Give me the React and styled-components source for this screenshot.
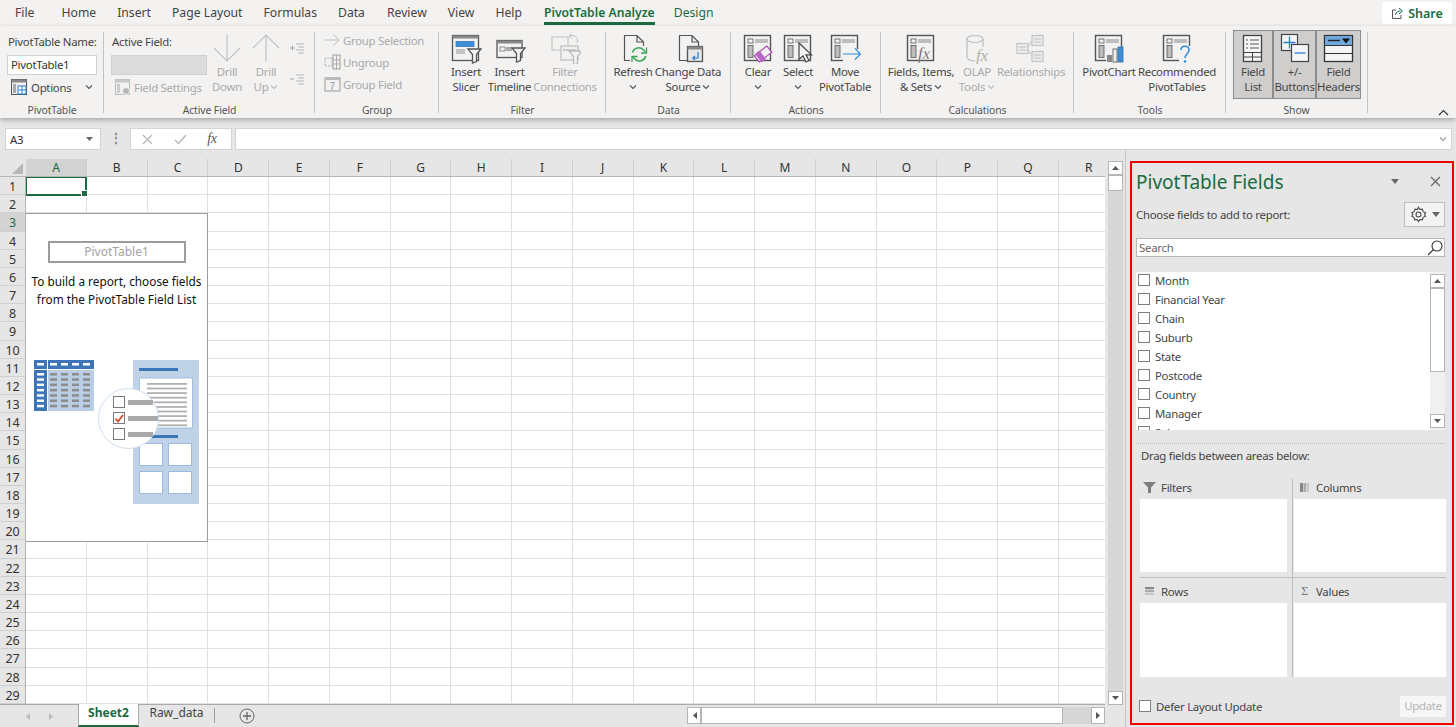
import React from "react";
import styled, { createGlobalStyle } from "styled-components";

const FONT = `"Noto Sans", "Open Sans", "Liberation Sans", sans-serif`;
const GREEN = "#1b6b41";
const DIS = "#a9a9a9";
const TXT = "#444";

const Global = createGlobalStyle`
  html, body { margin: 0; padding: 0; background: #e6e6e6; overflow: hidden; }
  * { box-sizing: border-box; }
  body { font-family: ${FONT}; }
`;

const Page = styled.div`
  width: 1456px; height: 727px; display: flex; flex-direction: column; overflow: hidden;
  background: #e6e6e6; font-size: 11.5px; color: ${TXT}; font-family: ${FONT}; letter-spacing: -0.27px;
`;

/* tabs */
const TabBar = styled.div`
  height: 26px; flex: none; background: #f3f2f1; display: flex; align-items: flex-start; position: relative; padding-left: 15px; letter-spacing: 0;
`;
const Tab = styled.div`
  margin-right: ${p => p.$gap}px; height: 25px; padding-top: 4px; line-height: 18px; font-size: 12.2px; white-space: nowrap;
  color: ${p => (p.$on || p.$green ? GREEN : "#444")}; font-weight: ${p => (p.$on ? 600 : 400)};
  border-bottom: ${p => (p.$on ? `3px solid ${GREEN}` : "3px solid transparent")};
`;
const ShareBtn = styled.div`
  margin-left: auto; margin-right: 4px; margin-top: 2px; width: 70px; height: 22px; background: #fff; border-radius: 2px;
  display: flex; align-items: center; justify-content: center; gap: 4px; color: ${GREEN}; font-weight: 600; font-size: 12.5px;
`;

/* ribbon */
const Ribbon = styled.div`
  height: 92px; flex: none; background: #f3f2f1; display: flex; box-shadow: 0 2px 5px rgba(0,0,0,.28); position: relative; z-index: 2;
`;
const Group = styled.div`
  width: ${p => p.$w}px; flex: none; position: relative; display: flex; flex-direction: column; padding-top: 4px;
  &::after { content: ""; position: absolute; right: 0; top: 6px; bottom: 5px; width: 1px; background: #c4c4c4; }
`;
const GroupBody = styled.div`
  flex: 1; display: flex; align-items: flex-start; padding-left: ${p => p.$pl || 0}px; min-height: 0;
`;
const GroupLabel = styled.div`
  height: 16px; text-align: center; line-height: 16px; font-size: 10.4px; color: #555; padding-right: ${p => p.$pr || 0}px; letter-spacing: -0.1px;
`;
const Big = styled.div`
  width: ${p => p.$w}px; height: 69px; flex: none; display: flex; flex-direction: column; align-items: center;
  color: ${p => (p.$off ? DIS : TXT)}; white-space: nowrap; line-height: 15px; font-size: 11.4px;
  background: ${p => (p.$on ? "#cfcecd" : "transparent")}; outline: ${p => (p.$on ? "1px solid #8c8c8c" : "none")}; outline-offset: -1px;
  & > svg:first-child { flex: none; margin-top: 2px; }
`;
const Line = styled.div`display: flex; align-items: center; gap: 2px; height: 15px;`;
const Chev = ({ c = "#555" }) => (
  <svg width="8" height="6" viewBox="0 0 8 6"><path d="M1 1.5 4 4.5 7 1.5" fill="none" stroke={c} strokeWidth="1.1" /></svg>
);

const NameCol = styled.div`width: 102px; padding-left: 8px; display: flex; flex-direction: column;`;
const FieldLabel = styled.div`height: 15px; margin-top: 4px; line-height: 15px; white-space: nowrap; font-size: 11.4px;`;
const NameInput = styled.div`
  width: 90px; height: 20px; margin: 6px 0 3px -1px; background: #fff; border: 1px solid #d0d0d0; padding-left: 3px; line-height: 17px; font-size: 11.4px; color: #333;
`;
const GrayInput = styled(NameInput)`width: 96px; background: #dcdcdc; border-color: #d0d0d0;`;
const Small = styled.div`
  display: flex; align-items: center; gap: ${p => p.$gap ?? 2}px; height: 18px; white-space: nowrap; font-size: 11.4px; color: ${p => (p.$off ? DIS : TXT)};
  margin-left: ${p => p.$ml || 0}px;
`;
const Gap = styled.span`width: ${p => p.$w}px; flex: none;`;
const ActiveCol = styled.div`width: 104px; padding-left: 8px; display: flex; flex-direction: column;`;
const TinyCol = styled.div`width: 22px; display: flex; flex-direction: column; gap: 17px; padding-top: 12px; padding-left: 3px;`;
const GroupCol = styled.div`display: flex; flex-direction: column; gap: 4px; padding: 1px 0 0 9px;`;

const CollapseBtn = styled.div`position: absolute; right: 7px; bottom: 2px; line-height: 0;`;

/* formula */
const FormulaBar = styled.div`
  height: 32px; flex: none; display: flex; align-items: flex-end; gap: 3px; padding: 0 4px 0 5px; background: #e6e6e6;
`;
const NameBox = styled.div`
  width: 96px; height: 22px; background: #fff; border: 1px solid #d4d4d4; display: flex; align-items: center; justify-content: space-between;
  padding: 0 6px 0 4px; font-size: 11.4px; color: #333;
`;
const Dots = styled.div`width: 23px; text-align: center; color: #888; font-size: 12px; line-height: 20px; height: 22px; font-weight: 700;`;
const FxBox = styled.div`
  width: 102px; height: 22px; background: #fff; border: 1px solid #d4d4d4; display: flex; align-items: center; justify-content: space-around; padding: 0 4px 0 1px;
`;
const FxText = styled.span`font-family: "Liberation Serif", serif; font-style: italic; font-size: 14px; color: #555;`;
const FormulaInput = styled.div`
  flex: 1; height: 22px; background: #fff; border: 1px solid #d4d4d4; display: flex; align-items: center; justify-content: flex-end; padding-right: 4px;
`;

/* workspace */
const Workspace = styled.div`flex: 1; display: flex; min-height: 0;`;
const SheetArea = styled.div`
  width: 1105px; flex: none; display: flex; flex-direction: column; padding-top: 9px;
`;
const ColHeaders = styled.div`
  height: 18px; flex: none; display: flex; overflow: hidden; background: #e6e6e6; border-bottom: 1px solid #b5b5b5;
`;
const Corner = styled.div`
  width: 26px; flex: none; position: relative;
  &::after { content: ""; position: absolute; right: 3px; bottom: 2px; border-style: solid; border-width: 0 0 11px 11px; border-color: transparent transparent #b7b7b7 transparent; }
`;
const ColHead = styled.div`
  width: 60.75px; flex: none; text-align: center; line-height: 17px; font-size: 12px; color: ${p => (p.$on ? GREEN : "#333")};
  background: ${p => (p.$on ? "#d3d3d3" : "transparent")}; border-right: 1px solid #cfcfcf;
`;
const SheetBody = styled.div`height: 527px; flex: none; display: flex;`;
const RowHeads = styled.div`width: 26px; flex: none; display: flex; flex-direction: column; border-right: 1px solid #b5b5b5;`;
const RowHead = styled.div`
  flex: 1 1 0; min-height: 0; overflow: hidden; text-align: center; font-size: 12.5px; line-height: 20px; color: ${p => (p.$on ? GREEN : "#333")};
  background: ${p => (p.$on ? "#d3d3d3" : "#e6e6e6")}; border-bottom: 1px solid #cfcfcf;
`;
const Cells = styled.div`
  flex: 1; position: relative; overflow: hidden; background-color: #fff;
  background-image:
    repeating-linear-gradient(to right, transparent 0, transparent 59.75px, #e0e0e0 59.75px, #e0e0e0 60.75px),
    repeating-linear-gradient(to bottom, transparent 0, transparent 17.17px, #e0e0e0 17.17px, #e0e0e0 18.17px);
`;
const Selected = styled.div`
  position: absolute; left: -1px; top: -1px; width: 62px; height: 19.5px; border: 2px solid ${GREEN};
  &::after { content: ""; position: absolute; right: -3px; bottom: -3px; width: 5px; height: 5px; background: ${GREEN}; border: 1px solid #fff; }
`;
const Placeholder = styled.div`
  position: absolute; left: 0; top: 36px; width: 182px; height: 329px; background: #fff; border: 1px solid #9c9c9c; border-left: none;
  display: flex; flex-direction: column; align-items: center; letter-spacing: 0;
`;
const PlaceTitle = styled.div`
  width: 138px; height: 22px; margin-top: 27px; border: 2px solid #9c9c9c; text-align: center; line-height: 18px; color: #a2a2a2; font-size: 12px; flex: none;
`;
const PlaceText = styled.div`
  margin-top: 9px; text-align: center; line-height: 18px; font-size: 11.8px; color: #111; white-space: nowrap; flex: none;
`;
const PlaceArt = styled.svg`margin-top: 37px; flex: none; align-self: flex-start;`;

const SheetTabs = styled.div`
  height: 23px; flex: none; display: flex; align-items: stretch; border-top: 1px solid #aaa; background: #e6e6e6;
`;
const Nav = styled.div`width: 78px; flex: none; display: flex; align-items: center; justify-content: center; gap: 15px; padding-left: 0;`;
const SheetTab = styled.div`
  width: ${p => p.$w}px; flex: none; text-align: center; font-size: 12px; line-height: 18px; margin-top: -1px; letter-spacing: 0;
  color: ${p => (p.$on ? GREEN : "#444")}; font-weight: ${p => (p.$on ? 700 : 400)};
  background: ${p => (p.$on ? "#fff" : "transparent")}; border-bottom: ${p => (p.$on ? `2px solid ${GREEN}` : "none")};
  border-left: ${p => (p.$on ? "1px solid #aaa" : "none")}; border-right: ${p => (p.$on ? "1px solid #aaa" : "none")};
`;
const TabSep = styled.div`width: 1px; height: 15px; background: #9c9c9c; margin: 3px 0 0 0; flex: none;`;
const AddSheet = styled.div`margin-left: 24px; display: flex; align-items: center; height: 21px; flex: none;`;
const HScroll = styled.div`
  margin-left: auto; width: 418px; flex: none; display: flex; height: 17px; margin-top: 2px; background: #d6d6d6;
`;
const ScrollBtn = styled.div`
  width: ${p => p.$w || 14}px; height: ${p => p.$h || 14}px; flex: none; background: #fff; border: 1px solid #b5b5b5; display: flex; align-items: center; justify-content: center;
`;
const HThumb = styled.div`width: 362px; flex: none; background: #fff; border: 1px solid #b5b5b5;`;
const HTrack = styled.div`flex: 1;`;

const VScroll = styled.div`
  width: 15px; flex: none; margin: 11px 0 22px 3px; display: flex; flex-direction: column; background: #d6d6d6;
`;
const VThumb = styled.div`height: 16px; background: #fff; border: 1px solid #b5b5b5; flex: none;`;
const Spacer = styled.div`flex: 1;`;
const Divider = styled.div`width: 1px; flex: none; margin: 0 4px 0 2px; background: #c6c6c6;`;

/* panel */
const Panel = styled.div`
  width: 324px; height: 564px; margin-top: 11px; flex: none; border: 2px solid #ee0000; background: #e6e6e6; display: flex; flex-direction: column; padding: 0 7px 0 4px;
`;
const PanelHead = styled.div`height: 35px; flex: none; display: flex; align-items: center; padding-top: 2px;`;
const PanelTitle = styled.div`font-size: 19px; color: ${GREEN}; flex: 1; letter-spacing: 0;`;
const Caret = styled.div`
  width: 0; height: 0; border-left: 4px solid transparent; border-right: 4px solid transparent; border-top: 5px solid #666; margin: 0 ${p => p.$m ?? 0}px 0 0;
`;
const CloseBtn = styled.span`margin-right: 4px; line-height: 0;`;
const ChooseRow = styled.div`height: 29px; margin-top: 2px; flex: none; display: flex; align-items: center; justify-content: space-between; font-size: 11.4px;`;
const GearBtn = styled.div`width: 41px; height: 25px; background: #f3f3f3; border: 1px solid #bdbdbd; display: flex; align-items: center; justify-content: center; gap: 5px;`;
const SearchBox = styled.div`
  height: 19px; margin-top: 9px; flex: none; background: #fff; border: 1px solid #b8b8b8; display: flex; align-items: center; justify-content: space-between; padding: 0 1px 0 2px; color: #666; font-size: 11.4px;
`;
const FieldList = styled.div`
  height: 158px; margin-top: 15px; flex: none; background: #fff; display: flex; overflow: hidden;
`;
const FieldRows = styled.div`flex: 1; overflow: hidden;`;
const FieldRow = styled.div`height: 19px; display: flex; align-items: center; gap: 5px; padding-left: 2px; font-size: 11.4px; color: #444; position: relative; top: -1px;`;
const Box = styled.div`width: 12px; height: 12px; flex: none; border: 1px solid #7f7f7f; background: #fff; position: relative; top: -1px;`;
const ListScroll = styled.div`width: 15px; flex: none; display: flex; flex-direction: column; background: #f0f0f0; padding: 2px 0;`;
const ListThumb = styled.div`height: 84px; flex: none; background: #fff; border: 1px solid #b5b5b5;`;
const DotLine = styled.div`height: 0; margin-top: 13px; flex: none; border-top: 1px dotted #b5b5b5;`;
const DragText = styled.div`height: 22px; line-height: 22px; margin-top: 1px; padding-left: 5px; flex: none; font-size: 11.4px;`;
const Quad = styled.div`
  margin: 10px -1px 0 4px; flex: none; display: grid; grid-template-columns: 152px 152px; grid-template-rows: 102px 102px; column-gap: 2px; position: relative;
`;
const VRule = styled.div`position: absolute; left: 152px; top: 2px; bottom: 4px; width: 1px; background: #bdbdbd;`;
const HRule = styled.div`position: absolute; left: 0; right: 0; top: 100px; height: 1px; background: #bdbdbd;`;
const Area = styled.div`display: flex; flex-direction: column; padding: ${p => (p.$second ? "2px" : "0")} ${p => (p.$left ? "5px" : "0")} 0 0; height: 100%;`;
const AreaHead = styled.div`height: 20px; margin-bottom: 2px; flex: none; display: flex; align-items: center; gap: 5px; padding-left: ${p => (p.$right ? 4 : 3)}px; font-size: 11.4px;`;
const AreaIcon = styled.div`width: 13px; display: flex; justify-content: center; flex: none;`;
const SigmaIcon = styled.span`font-family: "Liberation Serif", serif; font-size: 12px; color: #777; line-height: 12px;`;
const AreaBox = styled.div`height: ${p => p.$h}px; background: #fff; flex: none;`;
const Footer = styled.div`
  margin-top: 15px; flex: none; display: flex; align-items: center; justify-content: space-between; padding-left: 3px; height: 21px;
`;
const Defer = styled.div`display: flex; align-items: center; gap: 5px; font-size: 11.4px;`;
const UpdateBtn = styled.div`
  width: 46px; height: 21px; margin-right: -1px; background: #f6f6f6; text-align: center; line-height: 20px; color: #b5b5b5; font-size: 11.4px;
`;

/* icons */
const S = ({ children, w = 32, h = 32, vb }) => (
  <svg width={w} height={h} viewBox={vb || `0 0 ${w} ${h}`} fill="none">{children}</svg>
);
const Pivot = ({ c = "#555", f = "#bdbdbd" }) => (
  <>
    <rect x="2.5" y="3.5" width="26" height="25" stroke={c} strokeWidth="1.4" />
    <rect x="6" y="7" width="5" height="4" stroke={c} strokeWidth=".8" />
    <rect x="13" y="7" width="13" height="4" fill={f} />
    <rect x="6" y="13.5" width="5" height="12" fill={f} stroke={c} strokeWidth=".8" />
  </>
);
const Funnel = ({ x = 0, y = 0, c = "#555", f = "#f3f2f1" }) => (
  <path transform={`translate(${x} ${y})`} d="M0 0H13L8.5 5.5V12.5L4.5 14V5.5Z" fill={f} stroke={c} strokeWidth="1.3" />
);
const Page32 = ({ c = "#555" }) => (
  <path d="M7.5 3.5H20L26.5 10V28.5H7.5Z M20 3.5V10H26.5" stroke={c} strokeWidth="1.2" fill="#f3f2f1" />
);
const Slicer = () => (
  <S>
    <rect x="2.5" y="3.5" width="26" height="25" stroke="#555" strokeWidth="1.3" />
    <rect x="2.5" y="3.5" width="26" height="3" fill="#888" />
    <rect x="6" y="9.5" width="18" height="5" fill="#3f8fd8" stroke="#2b6fb0" strokeWidth=".7" />
    <rect x="6" y="17" width="9" height="5" fill="#c4c4c4" />
    <Funnel x="18" y="17" />
  </S>
);
const Timeline = () => (
  <S>
    <rect x="3" y="8.5" width="25" height="17" stroke="#555" strokeWidth="1.3" />
    <rect x="3" y="8.5" width="25" height="3" fill="#888" />
    <rect x="6" y="15" width="5" height="4" stroke="#777" strokeWidth=".8" />
    <rect x="12" y="15" width="6" height="4" fill="#aaa" />
    <Funnel x="18" y="16" />
  </S>
);
const Connections = () => (
  <S>
    <rect x="3" y="5" width="16" height="13" stroke="#c9c9c9" strokeWidth="1.3" />
    <rect x="12" y="14" width="17" height="14" fill="#f3f2f1" stroke="#c0c0c0" strokeWidth="1.3" />
    <rect x="14" y="17" width="13" height="2" fill="#c9c9c9" />
    <path d="M20 4 C 26 2 30 6 28 11 M20 4l3-2.5M20 4l3 2.5" stroke="#c0c0c0" strokeWidth="1" />
    <Funnel x="20" y="19" c="#bbb" />
  </S>
);
const Refresh = () => (
  <S>
    <Page32 />
    <rect x="13" y="14" width="18" height="17" fill="#f3f2f1" />
    <path d="M15.5 20.5a6.5 6.5 0 0 1 11-2.5l2 2M28.8 24a6.5 6.5 0 0 1-11 3l-2-2" stroke="#3aa655" strokeWidth="1.5" />
    <path d="M29.5 15.5V21H24M15 30V24.5H20.5" stroke="#3aa655" strokeWidth="1.3" />
  </S>
);
const ChangeData = () => (
  <S>
    <Page32 />
    <rect x="15.5" y="14.5" width="15" height="15" fill="#e6e6e6" stroke="#555" strokeWidth="1.3" />
    <rect x="15.5" y="14.5" width="15" height="3" fill="#888" />
    <path d="M26 20v6h-5M23 24l-2.2 2 2.2 2" stroke="#2b7cd3" strokeWidth="1.2" />
  </S>
);
const Clear = () => (
  <S>
    <Pivot />
    <rect x="13" y="18" width="16" height="8" transform="rotate(-38 21 22)" fill="#f3f2f1" stroke="#a23cad" strokeWidth="1.1" />
    <path d="M13 22l6.5 8.5 4.5-3.5-6.5-8.5z" fill="#b666c4" />
  </S>
);
const SelectIc = () => (
  <S>
    <Pivot />
    <path d="M17 11V27.5L21 24l3 6 3-1.5-3-5.6h5.5Z" fill="#f3f2f1" stroke="#444" strokeWidth="1.2" />
  </S>
);
const Move = () => (
  <S>
    <Pivot />
    <rect x="14" y="17" width="18" height="14" fill="#f3f2f1" />
    <path d="M14 22H31M26 16.5 31.5 22 26 27.5" stroke="#2b8ede" strokeWidth="1.2" />
  </S>
);
const Fields = () => (
  <S>
    <Pivot />
    <text x="13" y="27" fontFamily="Liberation Serif, serif" fontStyle="italic" fontSize="17" fill="#444" stroke="#f3f2f1" strokeWidth=".3">fx</text>
  </S>
);
const Olap = () => (
  <S>
    <path d="M6 7v18c0 2.5 4 4 8 4M22 7v8" stroke="#bdbdbd" strokeWidth="1.2" />
    <ellipse cx="14" cy="7" rx="8" ry="3.5" stroke="#bdbdbd" strokeWidth="1.2" />
    <text x="15" y="29" fontFamily="Liberation Serif, serif" fontStyle="italic" fontSize="17" fill="#b0b0b0">fx</text>
  </S>
);
const Relations = () => (
  <S>
    <g stroke="#c4c4c4" strokeWidth="1.2" fill="#ececec">
      <rect x="17" y="3.5" width="11" height="10" />
      <rect x="17" y="19.5" width="11" height="10" />
      <rect x="2" y="11.5" width="11" height="10" />
    </g>
    <path d="M13 15l4-6M13 18l4 6M19 7h7M19 10h7M19 23h7M19 26h7M4 15h7M4 18h7" stroke="#c0c0c0" strokeWidth="1" />
  </S>
);
const PChart = () => (
  <S>
    <Pivot />
    <rect x="13" y="18" width="19" height="13" fill="#f3f2f1" />
    <rect x="14" y="23" width="5" height="7" fill="#888" />
    <rect x="20" y="17" width="4" height="13" fill="#f3f2f1" stroke="#666" strokeWidth="1" />
    <rect x="25" y="15" width="5" height="15" fill="#3f8fd8" stroke="#2b6fb0" strokeWidth=".8" />
  </S>
);
const Recommended = () => (
  <S>
    <Pivot />
    <rect x="18" y="14" width="14" height="17" fill="#f3f2f1" />
    <path d="M20 18c0-5 8-5 8 0 0 4-4 4-4 8" stroke="#2b8ede" strokeWidth="1.5" />
    <circle cx="24" cy="29.5" r="1.2" fill="#2b8ede" />
  </S>
);
const FieldList_ = () => (
  <S>
    <rect x="6.5" y="3.5" width="18" height="26" fill="#f5f5f5" stroke="#444" strokeWidth="1.3" />
    <path d="M9 8h2M13 8h9M9 12h2M13 12h9M9 16h2M13 16h9" stroke="#555" />
    <path d="M6.5 20.5h18M6.5 25h18M15.5 20.5v9" stroke="#444" />
  </S>
);
const PlusMinus = () => (
  <S>
    <rect x="2.5" y="2.5" width="16" height="16" fill="#f5f5f5" stroke="#444" strokeWidth="1.2" />
    <path d="M4.5 10.5h12M10.5 4.5v12" stroke="#2b7cd3" strokeWidth="1.3" />
    <rect x="12.5" y="12.5" width="17" height="17" fill="#f5f5f5" stroke="#444" strokeWidth="1.2" />
    <path d="M15.5 21h11" stroke="#2b7cd3" strokeWidth="1.3" />
  </S>
);
const Headers = () => (
  <S>
    <rect x="1.5" y="3.5" width="28" height="26" fill="#f5f5f5" stroke="#333" strokeWidth="1.3" />
    <rect x="2" y="4" width="27" height="9" fill="#6fa8dc" />
    <path d="M5 8.5h12" stroke="#222" strokeWidth="1.4" />
    <path d="M19 6.5h8l-4 5z" fill="#111" />
    <path d="M1.5 13.5h28M1.5 21.5h28" stroke="#333" />
  </S>
);
const DrillArrow = ({ up }) => (
  <S>
    <path d={up ? "M16 29V3M3 16 16 3 29 16" : "M16 3V29M3 16 16 29 29 16"} stroke="#c2c2c2" strokeWidth="1.2" />
  </S>
);
const Share = () => (
  <svg width="13" height="13" viewBox="0 0 13 13" fill="none">
    <path d="M5 3H1.5v8.5h8.5V8" stroke="#555" />
    <path d="M4.5 8C5 5 7 4 9.5 4M8 1l3.5 3L8 7" stroke={GREEN} />
  </svg>
);
const OptionsIc = () => (
  <S w={18} h={18}>
    <rect x="1.5" y="1.5" width="15" height="15" stroke="#555" />
    <rect x="1.5" y="1.5" width="15" height="3" fill="#888" />
    <rect x="3" y="6" width="3" height="9" fill="#aaa" />
    <rect x="8" y="8" width="8" height="8" fill="#fff" stroke="#2b7cd3" />
    <path d="M8 12h8M12 8v8" stroke="#2b7cd3" />
  </S>
);
const SettingsIc = () => (
  <S w={18} h={18}>
    <rect x="1.5" y="1.5" width="14" height="15" stroke="#bbb" />
    <rect x="1.5" y="1.5" width="14" height="3" fill="#c9c9c9" />
    <rect x="3" y="6" width="3" height="9" fill="#ccc" />
    <circle cx="12" cy="13" r="3.5" fill="#b5b5b5" stroke="#f3f2f1" />
  </S>
);
const Indent = ({ minus }) => (
  <S w={16} h={14}>
    <path d={minus ? "M1 6h4" : "M1 6h5M3.5 3.5v5"} stroke="#a5a5a5" />
    <path d="M7 2h8M9 5h6M7 8h8M9 11h6" stroke="#b5b5b5" />
  </S>
);
const ArrowR = () => (
  <S w={17} h={14}>
    <path d="M1 7h14M9 1l6 6-6 6" stroke="#bdbdbd" />
  </S>
);
const UngroupIc = () => (
  <S w={17} h={16}>
    <rect x="1" y="4" width="7" height="8" stroke="#aaa" strokeDasharray="1.5 1" />
    <rect x="9" y="1" width="7" height="14" stroke="#999" />
    <path d="M9 6h7M9 10h7M12.5 1v14" stroke="#aaa" />
  </S>
);
const GroupFieldIc = () => (
  <S w={17} h={16}>
    <rect x="1" y="2" width="15" height="13" stroke="#999" />
    <rect x="1" y="1" width="15" height="3" fill="#bbb" />
    <text x="5.5" y="14" fontFamily="Liberation Sans, sans-serif" fontSize="10" fill="#999">7</text>
  </S>
);
const Tri = ({ dir = "down", c = "#555" }) => {
  const d = { down: "M1 2h7L4.5 6z", up: "M1 6h7L4.5 2z", right: "M2 1v7l4-3.5z", left: "M7 1v7l-4-3.5z" }[dir];
  return <svg width="9" height="9" viewBox="0 0 9 9"><path d={d} fill={c} /></svg>;
};
const X = ({ s = 11, c = "#666", sw = 1.2 }) => (
  <svg width={s} height={s} viewBox="0 0 11 11"><path d="M1 1 10 10M10 1 1 10" stroke={c} strokeWidth={sw} fill="none" /></svg>
);
const Gear = () => (
  <svg width="17" height="17" viewBox="0 0 24 24" fill="none" stroke="#444" strokeWidth="1.5">
    <path d="M12 2l2 3 3.5-.5 1 3.5 3.5 1.5-1.5 2.5 1.5 2.5-3.5 1.5-1 3.5-3.5-.5-2 3-2-3-3.5.5-1-3.5L2.5 14.5 4 12 2.5 9.5 6 8l1-3.5L10.5 5z" />
    <circle cx="12" cy="12" r="3.5" />
  </svg>
);
const Magnifier = () => (
  <svg width="16" height="16" viewBox="0 0 16 16" fill="none" stroke="#333" strokeWidth="1.1">
    <circle cx="10" cy="6" r="5" /><path d="M6.5 9.5 1 15" />
  </svg>
);

const Art = () => {
  const rows = [0, 1, 2, 3, 4, 5, 6];
  const cols = [50, 61, 72, 83];
  return (
    <PlaceArt width="182" height="165" viewBox="26 345 182 165">
      <rect x="34" y="360" width="13" height="51" fill="#3d76b8" />
      <rect x="48" y="360" width="46" height="9" fill="#3d76b8" />
      <rect x="48" y="370" width="46" height="41" fill="#b9cde5" />
      <rect x="34" y="369" width="60" height="1" fill="#fff" />
      <rect x="37" y="363" width="7" height="2.5" fill="#fff" />
      {cols.map(x => <rect key={x} x={x} y="363" width="7" height="2.5" fill="#fff" />)}
      {rows.map(i => <rect key={i} x="37" y={373 + i * 5.3} width="7" height="2.5" fill="#fff" />)}
      {rows.map(i => cols.map(x => <rect key={x} x={x} y={373 + i * 5.3} width="7" height="2.5" fill="#8c8c8c" />))}
      <rect x="133" y="360" width="66" height="144" fill="#bfd2e8" />
      <rect x="139" y="368" width="39" height="3" fill="#3d76b8" />
      <rect x="139.5" y="378" width="53" height="50" fill="#fff" stroke="#a2bfdc" />
      {[0, 1, 2, 3, 4, 5, 6, 7, 8, 9].map(i => <rect key={i} x="147" y={383 + i * 4.6} width="40" height="1.8" fill="#b0b0b0" />)}
      <rect x="139" y="435" width="39" height="3" fill="#3d76b8" />
      {[[139, 443], [168, 443], [139, 471], [168, 471]].map(([x, y]) => (
        <rect key={x + "-" + y} x={x + 0.5} y={y + 0.5} width="23" height="22" fill="#fff" stroke="#9dbbdb" />
      ))}
      <circle cx="128.5" cy="418.5" r="30" fill="#fff" stroke="#cfdef0" />
      {[396, 412, 428].map(y => <rect key={y} x="113.5" y={y + 0.5} width="11" height="11" fill="#fff" stroke="#7a7a7a" />)}
      <rect x="128" y="400" width="25" height="5" fill="#aaa" />
      <rect x="128" y="416" width="30" height="5" fill="#aaa" />
      <rect x="128" y="432" width="25" height="5" fill="#aaa" />
      <path d="M115.5 418.5 118 421.5 123 415" stroke="#d9472b" strokeWidth="1.8" fill="none" />
    </PlaceArt>
  );
};

const colNames = "ABCDEFGHIJKLMNOPQR".split("");
const rowNums = Array.from({ length: 29 }, (_, i) => i + 1);
const fieldNames = ["Month", "Financial Year", "Chain", "Suburb", "State", "Postcode", "Country", "Manager", "Sales"];
const tabs = [
  ["File", 27], ["Home", 21], ["Insert", 21], ["Page Layout", 21], ["Formulas", 21], ["Data", 22], ["Review", 21], ["View", 21], ["Help", 22],
];

export default function App() {
  return (
    <Page>
      <Global />
      <TabBar>
        {tabs.map(([t, g]) => <Tab key={t} $gap={g}>{t}</Tab>)}
        <Tab $on $gap={19}>PivotTable Analyze</Tab>
        <Tab $green $gap={0}>Design</Tab>
        <ShareBtn><Share />Share</ShareBtn>
      </TabBar>

      <Ribbon>
        <Group $w={104}>
          <GroupBody>
            <NameCol>
              <FieldLabel>PivotTable Name:</FieldLabel>
              <NameInput>PivotTable1</NameInput>
              <Small $gap={3} $ml={2}>
                <OptionsIc />Options<Gap $w={8} /><Chev />
              </Small>
            </NameCol>
          </GroupBody>
          <GroupLabel>PivotTable</GroupLabel>
        </Group>

        <Group $w={211}>
          <GroupBody>
            <ActiveCol>
              <FieldLabel>Active Field:</FieldLabel>
              <GrayInput />
              <Small $off $ml={2}><SettingsIc />Field Settings</Small>
            </ActiveCol>
            <Big $w={38} $off><DrillArrow /><Line>Drill</Line><Line>Down</Line></Big>
            <Big $w={40} $off><DrillArrow up /><Line>Drill</Line><Line>Up <Chev c="#bbb" /></Line></Big>
            <TinyCol><Indent /><Indent minus /></TinyCol>
          </GroupBody>
          <GroupLabel>Active Field</GroupLabel>
        </Group>

        <Group $w={124}>
          <GroupBody>
            <GroupCol>
              <Small $off><ArrowR />Group Selection</Small>
              <Small $off><UngroupIc />Ungroup</Small>
              <Small $off><GroupFieldIc />Group Field</Small>
            </GroupCol>
          </GroupBody>
          <GroupLabel>Group</GroupLabel>
        </Group>

        <Group $w={167}>
          <GroupBody $pl={5}>
            <Big $w={44}><Slicer /><Line>Insert</Line><Line>Slicer</Line></Big>
            <Big $w={43}><Timeline /><Line>Insert</Line><Line>Timeline</Line></Big>
            <Big $w={68} $off><Connections /><Line>Filter</Line><Line>Connections</Line></Big>
          </GroupBody>
          <GroupLabel>Filter</GroupLabel>
        </Group>

        <Group $w={125}>
          <GroupBody $pl={5}>
            <Big $w={44}><Refresh /><Line>Refresh</Line><Line><Chev /></Line></Big>
            <Big $w={66}><ChangeData /><Line>Change Data</Line><Line>Source <Chev /></Line></Big>
          </GroupBody>
          <GroupLabel>Data</GroupLabel>
        </Group>

        <Group $w={150}>
          <GroupBody $pl={6}>
            <Big $w={42}><Clear /><Line>Clear</Line><Line><Chev /></Line></Big>
            <Big $w={38}><SelectIc /><Line>Select</Line><Line><Chev /></Line></Big>
            <Big $w={56}><Move /><Line>Move</Line><Line>PivotTable</Line></Big>
          </GroupBody>
          <GroupLabel>Actions</GroupLabel>
        </Group>

        <Group $w={193}>
          <GroupBody $pl={6}>
            <Big $w={68}><Fields /><Line>Fields, Items,</Line><Line>&amp; Sets <Chev /></Line></Big>
            <Big $w={44} $off><Olap /><Line>OLAP</Line><Line>Tools <Chev c="#bbb" /></Line></Big>
            <Big $w={64} $off><Relations /><Line>Relationships</Line></Big>
          </GroupBody>
          <GroupLabel>Calculations</GroupLabel>
        </Group>

        <Group $w={152}>
          <GroupBody $pl={8}>
            <Big $w={54}><PChart /><Line>PivotChart</Line></Big>
            <Big $w={82}><Recommended /><Line>Recommended</Line><Line>PivotTables</Line></Big>
          </GroupBody>
          <GroupLabel>Tools</GroupLabel>
        </Group>

        <Group $w={142}>
          <GroupBody $pl={7}>
            <Big $w={40} $on><FieldList_ /><Line>Field</Line><Line>List</Line></Big>
            <Big $w={43} $on><PlusMinus /><Line>+/-</Line><Line>Buttons</Line></Big>
            <Big $w={45} $on><Headers /><Line>Field</Line><Line>Headers</Line></Big>
          </GroupBody>
          <GroupLabel $pr={1}>Show</GroupLabel>
        </Group>

        <CollapseBtn>
          <svg width="11" height="7" viewBox="0 0 11 7"><path d="M1 6 5.5 1.5 10 6" stroke="#333" fill="none" strokeWidth="1.2" /></svg>
        </CollapseBtn>
      </Ribbon>

      <FormulaBar>
        <NameBox>A3<Tri c="#666" /></NameBox>
        <Dots>⋮</Dots>
        <FxBox><X c="#b5b5b5" /><svg width="13" height="11" viewBox="0 0 13 11"><path d="M1 6 4.5 9.5 12 1" stroke="#b5b5b5" fill="none" strokeWidth="1.3" /></svg><FxText>fx</FxText></FxBox>
        <FormulaInput><Chev c="#999" /></FormulaInput>
      </FormulaBar>

      <Workspace>
        <SheetArea>
          <ColHeaders>
            <Corner />
            {colNames.map((c, i) => <ColHead key={c} $on={i === 0}>{c}</ColHead>)}
          </ColHeaders>
          <SheetBody>
            <RowHeads>
              {rowNums.map(n => <RowHead key={n} $on={n === 3}>{n}</RowHead>)}
            </RowHeads>
            <Cells>
              <Selected />
              <Placeholder>
                <PlaceTitle>PivotTable1</PlaceTitle>
                <PlaceText>To build a report, choose fields<br />from the PivotTable Field List</PlaceText>
                <Art />
              </Placeholder>
            </Cells>
          </SheetBody>
          <SheetTabs>
            <Nav><Tri dir="left" c="#bbb" /><Tri dir="right" c="#bbb" /></Nav>
            <SheetTab $w={61} $on>Sheet2</SheetTab>
            <SheetTab $w={75}>Raw_data</SheetTab>
            <TabSep />
            <AddSheet>
              <svg width="16" height="16" viewBox="0 0 16 16" fill="none" stroke="#666"><circle cx="8" cy="8" r="7" /><path d="M8 4v8M4 8h8" strokeWidth="1.3" /></svg>
            </AddSheet>
            <HScroll>
              <ScrollBtn $w={14} $h={17}><Tri dir="left" c="#555" /></ScrollBtn>
              <HThumb />
              <HTrack />
              <ScrollBtn $w={14} $h={17}><Tri dir="right" c="#555" /></ScrollBtn>
            </HScroll>
          </SheetTabs>
        </SheetArea>

        <VScroll>
          <ScrollBtn $w={15}><Tri dir="up" /></ScrollBtn>
          <VThumb />
          <Spacer />
          <ScrollBtn $w={15}><Tri /></ScrollBtn>
        </VScroll>
        <Divider />

        <Panel>
          <PanelHead>
            <PanelTitle>PivotTable Fields</PanelTitle>
            <Caret $m={31} />
            <CloseBtn><X /></CloseBtn>
          </PanelHead>
          <ChooseRow>
            Choose fields to add to report:
            <GearBtn><Gear /><Caret /></GearBtn>
          </ChooseRow>
          <SearchBox>Search<Magnifier /></SearchBox>
          <FieldList>
            <FieldRows>
              {fieldNames.map(f => <FieldRow key={f}><Box />{f}</FieldRow>)}
            </FieldRows>
            <ListScroll>
              <ScrollBtn $w={15}><Tri dir="up" /></ScrollBtn>
              <ListThumb />
              <Spacer />
              <ScrollBtn $w={15}><Tri /></ScrollBtn>
            </ListScroll>
          </FieldList>
          <DotLine />
          <DragText>Drag fields between areas below:</DragText>
          <Quad>
            <Area $left>
              <AreaHead>
                <AreaIcon><svg width="13" height="11" viewBox="0 0 13 11"><path d="M0 0H13L8 5.5V11H5V5.5Z" fill="#7d7d7d" /></svg></AreaIcon>Filters
              </AreaHead>
              <AreaBox $h={73} />
            </Area>
            <Area>
              <AreaHead $right>
                <AreaIcon><svg width="9" height="9" viewBox="0 0 9 9"><path d="M0 0h3v9H0z" fill="#888" /><path d="M3.5 0h2.5v9H3.5z" fill="#aaa" /><path d="M6.5 0h2.5v9H6.5z" fill="#c6c6c6" /></svg></AreaIcon>Columns
              </AreaHead>
              <AreaBox $h={73} />
            </Area>
            <Area $left $second>
              <AreaHead>
                <AreaIcon><svg width="9" height="8" viewBox="0 0 9 8"><path d="M0 0h9v2.2H0z" fill="#888" /><path d="M0 3h9v2.2H0z" fill="#aaa" /><path d="M0 6h9v2H0z" fill="#c6c6c6" /></svg></AreaIcon>Rows
              </AreaHead>
              <AreaBox $h={74} />
            </Area>
            <Area $second>
              <AreaHead $right>
                <AreaIcon><SigmaIcon>Σ</SigmaIcon></AreaIcon>Values
              </AreaHead>
              <AreaBox $h={74} />
            </Area>
            <VRule />
            <HRule />
          </Quad>
          <Footer>
            <Defer><Box />Defer Layout Update</Defer>
            <UpdateBtn>Update</UpdateBtn>
          </Footer>
        </Panel>
      </Workspace>
    </Page>
  );
}
